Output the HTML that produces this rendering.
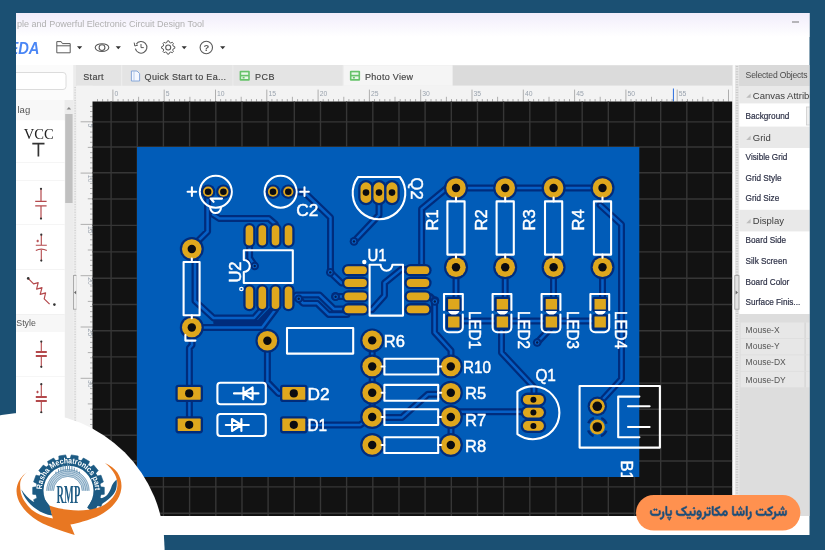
<!DOCTYPE html>
<html><head><meta charset="utf-8"><title>PCB Photo View</title>
<style>
html,body{margin:0;padding:0;}
body{width:825px;height:550px;overflow:hidden;background:#1b5073;font-family:"Liberation Sans",sans-serif;}
svg{position:absolute;left:0;top:0;display:block}
text{font-family:"Liberation Sans",sans-serif;}
.ser{font-family:"Liberation Serif",serif;}
.silk{fill:none;stroke:#fff;stroke-width:2.1;stroke-linejoin:round;stroke-linecap:round}
.lbl{fill:#fff;font-size:16px;stroke:#fff;stroke-width:0.45px;}
.ui{fill:#444;font-size:9px;stroke:#444;stroke-width:0.15px}
.prop{fill:#2f3348;font-size:8.2px;stroke:#2f3348;stroke-width:0.2px}
</style></head><body>
<svg width="825" height="550" viewBox="0 0 825 550">
<defs>
<linearGradient id="tg" x1="0" y1="0" x2="0" y2="1"><stop offset="0" stop-color="#f1edfb"/><stop offset="1" stop-color="#ffffff"/></linearGradient>
<clipPath id="win"><rect x="16" y="13" width="793.5" height="522"/></clipPath>
<clipPath id="pcbclip"><rect x="137" y="147" width="502.3" height="330"/></clipPath>
<clipPath id="canclip"><rect x="92.5" y="101.5" width="640" height="414.5"/></clipPath>
<filter id="soft2" color-interpolation-filters="sRGB" x="-5%" y="-5%" width="110%" height="110%"><feGaussianBlur stdDeviation="0.45"/></filter>
<filter id="soft" color-interpolation-filters="sRGB" x="-2%" y="-2%" width="104%" height="104%"><feGaussianBlur stdDeviation="0.7"/></filter>
</defs>

<rect x="16" y="13" width="793.5" height="522" fill="#fff"/>
<g clip-path="url(#win)"><g filter="url(#soft)">
<rect x="10" y="13" width="805" height="24" fill="url(#tg)"/>
<text x="17" y="26.5" font-size="8.6" fill="#b0b0b0" textLength="187" lengthAdjust="spacingAndGlyphs">ple and Powerful Electronic Circuit Design Tool</text>
<rect x="792" y="21.5" width="7" height="1" fill="#777"/>
<text x="8.4" y="54" font-size="16" font-weight="bold" font-style="italic" fill="#4a86f5" textLength="31" lengthAdjust="spacingAndGlyphs">EDA</text>
<path d="M56.8 52.8V41.6h4.4l1.2 2h7.8v9.2z M56.8 45.8h13.4" fill="none" stroke="#5a5a5a" stroke-width="1" stroke-linejoin="round"/>
<path d="M77.0 46.300000000000004h5.2l-2.6 2.9z" fill="#333"/>
<ellipse cx="102" cy="47.6" rx="6.8" ry="3.9" fill="none" stroke="#5a5a5a" stroke-width="1.1"/><circle cx="102" cy="47.6" r="2.9" fill="none" stroke="#5a5a5a" stroke-width="1.1"/>
<path d="M115.7 46.300000000000004h5.2l-2.6 2.9z" fill="#333"/>
<path d="M136.2 44.2A5.8 5.8 0 1 1 135.4 48.6" fill="none" stroke="#5a5a5a" stroke-width="1.1"/><path d="M134.2 42.6l0.6 3.4 3.2-1" fill="none" stroke="#5a5a5a" stroke-width="1"/><path d="M141 44v3.6h2.8" fill="none" stroke="#5a5a5a" stroke-width="1"/>
<path d="M174.8 46.7 L174.8 48.3 L173.2 48.9 L172.7 50.1 L173.4 51.6 L172.3 52.7 L170.8 52.0 L169.6 52.5 L169.0 54.1 L167.4 54.1 L166.8 52.5 L165.6 52.0 L164.1 52.7 L163.0 51.6 L163.7 50.1 L163.2 48.9 L161.6 48.3 L161.6 46.7 L163.2 46.1 L163.7 44.9 L163.0 43.4 L164.1 42.3 L165.6 43.0 L166.8 42.5 L167.4 40.9 L169.0 40.9 L169.6 42.5 L170.8 43.0 L172.3 42.3 L173.4 43.4 L172.7 44.9 L173.2 46.1z" fill="none" stroke="#5a5a5a" stroke-width="1"/><circle cx="168.2" cy="47.5" r="2.5" fill="none" stroke="#5a5a5a" stroke-width="1.1"/>
<path d="M181.6 46.300000000000004h5.2l-2.6 2.9z" fill="#333"/>
<circle cx="206.3" cy="47.5" r="6.2" fill="none" stroke="#5a5a5a" stroke-width="1.1"/><text x="206.3" y="51" font-size="9.5" text-anchor="middle" fill="#5a5a5a" font-weight="bold">?</text>
<path d="M220.1 46.300000000000004h5.2l-2.6 2.9z" fill="#333"/>
<rect x="16" y="65" width="58" height="460" fill="#fbfbfb"/>
<rect x="10.5" y="72.5" width="55.5" height="17" rx="3" fill="#fff" stroke="#dcdcdc"/>
<rect x="16" y="100" width="49" height="20" fill="#f8f8f8"/>
<text x="17.5" y="113.2" font-size="9.5" fill="#555">lag</text>
<rect x="64.6" y="100" width="8.6" height="420" fill="#ececec"/>
<rect x="65.2" y="114" width="7.4" height="89" fill="#c0c0c0"/>
<path d="M66.6 109.5l2.3-2.6 2.3 2.6z" fill="#888"/>
<rect x="16" y="120.5" width="48.6" height="42.5" fill="#fff"/>
<rect x="16" y="162.5" width="48.6" height="1" fill="#ececec"/>
<rect x="16" y="163" width="48.6" height="18" fill="#fff"/>
<rect x="16" y="180.5" width="48.6" height="1" fill="#ececec"/>
<rect x="16" y="181" width="48.6" height="44" fill="#fff"/>
<rect x="16" y="224.5" width="48.6" height="1" fill="#ececec"/>
<rect x="16" y="225" width="48.6" height="44.60000000000002" fill="#fff"/>
<rect x="16" y="269.1" width="48.6" height="1" fill="#ececec"/>
<rect x="16" y="269.6" width="48.6" height="45.0" fill="#fff"/>
<rect x="16" y="314.1" width="48.6" height="1" fill="#ececec"/>
<rect x="16" y="314.6" width="48.6" height="17.5" fill="#f7f7f7"/>
<rect x="16" y="332" width="48.6" height="44.5" fill="#fff"/>
<rect x="16" y="376.0" width="48.6" height="1" fill="#ececec"/>
<rect x="16" y="376.5" width="48.6" height="44.5" fill="#fff"/>
<rect x="16" y="420.5" width="48.6" height="1" fill="#ececec"/>
<text x="16.3" y="326.3" font-size="8.8" fill="#555">Style</text>
<text class="ser" x="38.8" y="139" font-size="14" text-anchor="middle" fill="#222" textLength="30" lengthAdjust="spacingAndGlyphs">VCC</text>
<path d="M32.3 143.6h12.2M38.4 143.6v13" stroke="#333" stroke-width="1.7" fill="none"/>
<path d="M41 188.6v12.6M41 206v12.7M35.2 201.4h11.4M35.2 205.8h11.4" stroke="#b4494c" stroke-width="1.2" fill="none"/>
<circle cx="41" cy="188.8" r="1.1" fill="#333"/><circle cx="41" cy="218.6" r="1.1" fill="#333"/>
<path d="M41.3 234.5v10.6M41.3 250v10.8M35.8 245.2h11M35.8 250.6q5.5-3 11 0M36.4 241h2.6M37.7 239.7v2.6" stroke="#b4494c" stroke-width="1.1" fill="none"/>
<circle cx="41.3" cy="234.7" r="1.1" fill="#333"/><circle cx="41.3" cy="260.6" r="1.1" fill="#333"/>
<path d="M28.4 278.6l5.2 5.2 4.6-1.2-1.6 6.6 5.4-1.6-1.8 6.8 5.4-1.6-1.4 6 5.4 5.4" stroke="#b4494c" stroke-width="1.2" fill="none" stroke-linejoin="round"/>
<circle cx="28.2" cy="278.4" r="1.3" fill="#333"/><circle cx="54.4" cy="304.6" r="1.3" fill="#333"/>
<path d="M41.3 341.4v10M41.3 356.6v10.4" stroke="#b4494c" stroke-width="1.1" fill="none"/><path d="M35.8 352h11M35.8 356h11" stroke="#b4494c" stroke-width="2" fill="none"/>
<circle cx="41.3" cy="341.6" r="1.1" fill="#333"/><circle cx="41.3" cy="366.8" r="1.1" fill="#333"/>
<path d="M41.3 384v12M41.3 402v10.6M36.2 392h2.6M37.5 390.7v2.6" stroke="#b4494c" stroke-width="1.1" fill="none"/><path d="M35.8 397h11M35.8 401h11" stroke="#b4494c" stroke-width="2" fill="none"/>
<circle cx="41.3" cy="384.2" r="1.1" fill="#333"/><circle cx="41.3" cy="412.4" r="1.1" fill="#333"/>
<rect x="73.2" y="65" width="3.8" height="455" fill="#ececec"/>
<path d="M75.1 87V520" stroke="#cfcfcf" stroke-width="1.4" stroke-dasharray="1 1.6"/>
<rect x="73.4" y="275.6" width="3.6" height="33.6" fill="#ededed" stroke="#9a9a9a" stroke-width="0.8"/>
<path d="M76.3 290.4l-2.3 2.1 2.3 2.1z" fill="#666"/>
<rect x="76.5" y="65.2" width="656" height="20.6" fill="#dbdbdb"/>
<rect x="76.5" y="65.2" width="45" height="20.6" fill="#e4e4e4"/>
<rect x="122" y="65.2" width="110.5" height="20.6" fill="#e4e4e4"/>
<rect x="233.2" y="65.2" width="109.6" height="20.6" fill="#e4e4e4"/>
<rect x="343.4" y="65.2" width="109.2" height="20.6" fill="#f5f5f5"/>
<path d="M121.7 65.2v20.6M232.9 65.2v20.6M343.2 65.2v20.6" stroke="#f0f0f0" stroke-width="1"/>
<text class="ui" x="83.2" y="79.6" font-size="9.4" textLength="20.4">Start</text>
<text class="ui" x="144.6" y="79.6" font-size="9.4" textLength="81.5">Quick Start to Ea...</text>
<text class="ui" x="255" y="79.6" font-size="9.4" textLength="19.4">PCB</text>
<text class="ui" x="365" y="79.6" font-size="9.4" textLength="48">Photo View</text>
<path d="M131.4 71h5.6l2.6 2.6v7.4h-8.2z" fill="#f4f8ff" stroke="#7a9fd6" stroke-width="0.9"/><path d="M134 71v10" stroke="#a9c2e6" stroke-width="0.8"/>
<rect x="239.6" y="70.8" width="10.2" height="10" rx="1" fill="#66c26a"/><rect x="241.2" y="72.4" width="7" height="2.4" fill="#e9f7e9"/><rect x="241.2" y="76.4" width="7" height="2.6" fill="#e9f7e9"/><rect x="242.6" y="76.9" width="2" height="1.6" fill="#66c26a"/>
<rect x="349.9" y="70.8" width="10.2" height="10" rx="1" fill="#66c26a"/><rect x="351.5" y="72.4" width="7" height="2.4" fill="#e9f7e9"/><rect x="351.5" y="76.4" width="7" height="2.6" fill="#e9f7e9"/><rect x="352.9" y="76.9" width="2" height="1.6" fill="#66c26a"/>
<rect x="76.5" y="85.8" width="656" height="16" fill="#f3f3f3"/>
<rect x="76.5" y="85.8" width="16.2" height="434" fill="#f3f3f3"/>
<path d="M97.5 99.0v2.6M102.6 99.0v2.6M107.8 99.0v2.6M112.9 89.6v12M118.0 99.0v2.6M123.2 99.0v2.6M128.3 99.0v2.6M133.4 99.0v2.6M138.6 96.8v4.8M143.7 99.0v2.6M148.8 99.0v2.6M153.9 99.0v2.6M159.1 99.0v2.6M164.2 89.6v12M169.3 99.0v2.6M174.5 99.0v2.6M179.6 99.0v2.6M184.7 99.0v2.6M189.9 96.8v4.8M195.0 99.0v2.6M200.1 99.0v2.6M205.2 99.0v2.6M210.4 99.0v2.6M215.5 89.6v12M220.6 99.0v2.6M225.8 99.0v2.6M230.9 99.0v2.6M236.0 99.0v2.6M241.2 96.8v4.8M246.3 99.0v2.6M251.4 99.0v2.6M256.5 99.0v2.6M261.7 99.0v2.6M266.8 89.6v12M271.9 99.0v2.6M277.1 99.0v2.6M282.2 99.0v2.6M287.3 99.0v2.6M292.4 96.8v4.8M297.6 99.0v2.6M302.7 99.0v2.6M307.8 99.0v2.6M313.0 99.0v2.6M318.1 89.6v12M323.2 99.0v2.6M328.4 99.0v2.6M333.5 99.0v2.6M338.6 99.0v2.6M343.8 96.8v4.8M348.9 99.0v2.6M354.0 99.0v2.6M359.1 99.0v2.6M364.3 99.0v2.6M369.4 89.6v12M374.5 99.0v2.6M379.7 99.0v2.6M384.8 99.0v2.6M389.9 99.0v2.6M395.0 96.8v4.8M400.2 99.0v2.6M405.3 99.0v2.6M410.4 99.0v2.6M415.6 99.0v2.6M420.7 89.6v12M425.8 99.0v2.6M431.0 99.0v2.6M436.1 99.0v2.6M441.2 99.0v2.6M446.4 96.8v4.8M451.5 99.0v2.6M456.6 99.0v2.6M461.7 99.0v2.6M466.9 99.0v2.6M472.0 89.6v12M477.1 99.0v2.6M482.3 99.0v2.6M487.4 99.0v2.6M492.5 99.0v2.6M497.6 96.8v4.8M502.8 99.0v2.6M507.9 99.0v2.6M513.0 99.0v2.6M518.2 99.0v2.6M523.3 89.6v12M528.4 99.0v2.6M533.6 99.0v2.6M538.7 99.0v2.6M543.8 99.0v2.6M549.0 96.8v4.8M554.1 99.0v2.6M559.2 99.0v2.6M564.3 99.0v2.6M569.5 99.0v2.6M574.6 89.6v12M579.7 99.0v2.6M584.9 99.0v2.6M590.0 99.0v2.6M595.1 99.0v2.6M600.2 96.8v4.8M605.4 99.0v2.6M610.5 99.0v2.6M615.6 99.0v2.6M620.8 99.0v2.6M625.9 89.6v12M631.0 99.0v2.6M636.2 99.0v2.6M641.3 99.0v2.6M646.4 99.0v2.6M651.5 96.8v4.8M656.7 99.0v2.6M661.8 99.0v2.6M666.9 99.0v2.6M672.1 99.0v2.6M677.2 89.6v12M682.3 99.0v2.6M687.5 99.0v2.6M692.6 99.0v2.6M697.7 99.0v2.6M702.8 96.8v4.8M708.0 99.0v2.6M713.1 99.0v2.6M718.2 99.0v2.6M723.4 99.0v2.6M728.5 89.6v12" stroke="#a6a6a6" stroke-width="0.9" fill="none"/>
<text x="114.5" y="96.4" font-size="6.8" fill="#9aa3ae">0</text>
<text x="165.8" y="96.4" font-size="6.8" fill="#9aa3ae">5</text>
<text x="217.1" y="96.4" font-size="6.8" fill="#9aa3ae">10</text>
<text x="268.4" y="96.4" font-size="6.8" fill="#9aa3ae">15</text>
<text x="319.7" y="96.4" font-size="6.8" fill="#9aa3ae">20</text>
<text x="371.0" y="96.4" font-size="6.8" fill="#9aa3ae">25</text>
<text x="422.3" y="96.4" font-size="6.8" fill="#9aa3ae">30</text>
<text x="473.6" y="96.4" font-size="6.8" fill="#9aa3ae">35</text>
<text x="524.9" y="96.4" font-size="6.8" fill="#9aa3ae">40</text>
<text x="576.2" y="96.4" font-size="6.8" fill="#9aa3ae">45</text>
<text x="627.5" y="96.4" font-size="6.8" fill="#9aa3ae">50</text>
<text x="678.8" y="96.4" font-size="6.8" fill="#9aa3ae">55</text>
<rect x="672.9" y="88.5" width="1.1" height="13" fill="#3a78e0"/>
<path d="M90.0 106.4h2.6M90.0 111.5h2.6M90.0 116.7h2.6M80.6 121.8h12M90.0 126.9h2.6M90.0 132.1h2.6M90.0 137.2h2.6M90.0 142.3h2.6M87.8 147.4h4.8M90.0 152.6h2.6M90.0 157.7h2.6M90.0 162.8h2.6M90.0 168.0h2.6M80.6 173.1h12M90.0 178.2h2.6M90.0 183.4h2.6M90.0 188.5h2.6M90.0 193.6h2.6M87.8 198.8h4.8M90.0 203.9h2.6M90.0 209.0h2.6M90.0 214.1h2.6M90.0 219.3h2.6M80.6 224.4h12M90.0 229.5h2.6M90.0 234.7h2.6M90.0 239.8h2.6M90.0 244.9h2.6M87.8 250.0h4.8M90.0 255.2h2.6M90.0 260.3h2.6M90.0 265.4h2.6M90.0 270.6h2.6M80.6 275.7h12M90.0 280.8h2.6M90.0 286.0h2.6M90.0 291.1h2.6M90.0 296.2h2.6M87.8 301.4h4.8M90.0 306.5h2.6M90.0 311.6h2.6M90.0 316.7h2.6M90.0 321.9h2.6M80.6 327.0h12M90.0 332.1h2.6M90.0 337.3h2.6M90.0 342.4h2.6M90.0 347.5h2.6M87.8 352.6h4.8M90.0 357.8h2.6M90.0 362.9h2.6M90.0 368.0h2.6M90.0 373.2h2.6M80.6 378.3h12M90.0 383.4h2.6M90.0 388.6h2.6M90.0 393.7h2.6M90.0 398.8h2.6M87.8 403.9h4.8M90.0 409.1h2.6M90.0 414.2h2.6M90.0 419.3h2.6M90.0 424.5h2.6M80.6 429.6h12M90.0 434.7h2.6M90.0 439.9h2.6M90.0 445.0h2.6M90.0 450.1h2.6M87.8 455.2h4.8M90.0 460.4h2.6M90.0 465.5h2.6M90.0 470.6h2.6M90.0 475.8h2.6M80.6 480.9h12M90.0 486.0h2.6M90.0 491.2h2.6M90.0 496.3h2.6M90.0 501.4h2.6M87.8 506.6h4.8M90.0 511.7h2.6" stroke="#a6a6a6" stroke-width="0.9" fill="none"/>
<text transform="translate(88.4 123.4) rotate(90)" font-size="6.8" fill="#9aa3ae">5</text>
<text transform="translate(88.4 174.7) rotate(90)" font-size="6.8" fill="#9aa3ae">10</text>
<text transform="translate(88.4 226.0) rotate(90)" font-size="6.8" fill="#9aa3ae">15</text>
<text transform="translate(88.4 277.3) rotate(90)" font-size="6.8" fill="#9aa3ae">20</text>
<text transform="translate(88.4 328.6) rotate(90)" font-size="6.8" fill="#9aa3ae">25</text>
<text transform="translate(88.4 379.9) rotate(90)" font-size="6.8" fill="#9aa3ae">30</text>
<text transform="translate(88.4 431.2) rotate(90)" font-size="6.8" fill="#9aa3ae">35</text>
<text transform="translate(88.4 482.5) rotate(90)" font-size="6.8" fill="#9aa3ae">40</text>
<rect x="92.5" y="101.5" width="640" height="414.5" fill="#121212"/>
<path d="M111.1 101.5V516M137.3 101.5V516M163.4 101.5V516M189.6 101.5V516M215.8 101.5V516M242.0 101.5V516M268.1 101.5V516M294.3 101.5V516M320.5 101.5V516M346.6 101.5V516M372.8 101.5V516M399.0 101.5V516M425.1 101.5V516M451.3 101.5V516M477.5 101.5V516M503.6 101.5V516M529.8 101.5V516M556.0 101.5V516M582.2 101.5V516M608.3 101.5V516M634.5 101.5V516M660.7 101.5V516M686.8 101.5V516M713.0 101.5V516M92.5 121.9H732.5M92.5 147.0H732.5M92.5 172.8H732.5M92.5 199.0H732.5M92.5 225.4H732.5M92.5 251.9H732.5M92.5 278.2H732.5M92.5 304.5H732.5M92.5 330.7H732.5M92.5 356.9H732.5M92.5 383.1H732.5M92.5 409.3H732.5M92.5 435.2H732.5M92.5 461.0H732.5M92.5 486.9H732.5M92.5 513.2H732.5" stroke="#363636" stroke-width="1.4" fill="none"/>
<rect x="137" y="147" width="502.3" height="330" fill="#015cb8"/>
<g clip-path="url(#pcbclip)">
<path d="M216 322.6H259l14.5-15" fill="none" stroke="#002c7c" stroke-width="5.5" stroke-linejoin="round" stroke-linecap="round"/>
<path d="M207.6 192V231.5L192 247M213 214.4l6.6 4.2H269l6.4 5.6V232M249.6 240V258l4.4 6.5M289 192h15l26.5 25.5V272.5M195 252V301l18.5 17H254l8-9M192 327.6H262l13.5-18M192 327.6V345L189.4 348V424M267.4 341V382l11 11.4h14M288.5 297h6l2-2H319.5l14.5 14h12M298.6 298.6l4.4 4.6H317l11.6 11.2H347M330.5 272.5l11 10.5h8M335.4 296.4h12M366 309.6h6l12.5-14V283l16.5-13.4h8M379 200v15l-25 26.4M456 188h-9l-25.4 21V270M456 188H602.5M456 267V300M505.2 267V300M553.5 267V300M602.5 267V300M454 321H600M549 330l-11.8 12.5M501.5 326V352.7L534 387.3V399M418 296.4h12l4.6 4.4V332.4L451 350.5V366M600 205l21.5 19.5V379L598.5 404M372.2 340V417M451 417V445M300 425h60l12-8M372 417.4H402L428 394.2H451M451 411.8H533" fill="none" stroke="#002c7c" stroke-width="7" stroke-linejoin="round" stroke-linecap="round"/>
<path d="M207.6 192V231.5L192 247M213 214.4l6.6 4.2H269l6.4 5.6V232M249.6 240V258l4.4 6.5M289 192h15l26.5 25.5V272.5M195 252V301l18.5 17H254l8-9M192 327.6H262l13.5-18M192 327.6V345L189.4 348V424M267.4 341V382l11 11.4h14M288.5 297h6l2-2H319.5l14.5 14h12M298.6 298.6l4.4 4.6H317l11.6 11.2H347M330.5 272.5l11 10.5h8M335.4 296.4h12M366 309.6h6l12.5-14V283l16.5-13.4h8M379 200v15l-25 26.4M456 188h-9l-25.4 21V270M456 188H602.5M456 267V300M505.2 267V300M553.5 267V300M602.5 267V300M454 321H600M549 330l-11.8 12.5M501.5 326V352.7L534 387.3V399M418 296.4h12l4.6 4.4V332.4L451 350.5V366M600 205l21.5 19.5V379L598.5 404M372.2 340V417M451 417V445M300 425h60l12-8M372 417.4H402L428 394.2H451M451 411.8H533" fill="none" stroke="#0660c6" stroke-width="2.5" stroke-linejoin="round" stroke-linecap="round"/>
<circle cx="330.3" cy="272.4" r="4.3" fill="#002c7c"/><circle cx="330.3" cy="272.4" r="2.3" fill="#0660c6"/><circle cx="330.3" cy="272.4" r="1.2" fill="#051c48"/>
<circle cx="335.4" cy="296.4" r="4.3" fill="#002c7c"/><circle cx="335.4" cy="296.4" r="2.3" fill="#0660c6"/><circle cx="335.4" cy="296.4" r="1.2" fill="#051c48"/>
<circle cx="354" cy="241.4" r="4.3" fill="#002c7c"/><circle cx="354" cy="241.4" r="2.3" fill="#0660c6"/><circle cx="354" cy="241.4" r="1.2" fill="#051c48"/>
<circle cx="298.7" cy="298.7" r="4.3" fill="#002c7c"/><circle cx="298.7" cy="298.7" r="2.3" fill="#0660c6"/><circle cx="298.7" cy="298.7" r="1.2" fill="#051c48"/>
<circle cx="335.6" cy="296.7" r="4.3" fill="#002c7c"/><circle cx="335.6" cy="296.7" r="2.3" fill="#0660c6"/><circle cx="335.6" cy="296.7" r="1.2" fill="#051c48"/>
<circle cx="435" cy="300.5" r="4.3" fill="#002c7c"/><circle cx="435" cy="300.5" r="2.3" fill="#0660c6"/><circle cx="435" cy="300.5" r="1.2" fill="#051c48"/>
<circle cx="434.8" cy="301.5" r="4.3" fill="#002c7c"/><circle cx="434.8" cy="301.5" r="2.3" fill="#0660c6"/><circle cx="434.8" cy="301.5" r="1.2" fill="#051c48"/>
<circle cx="537.2" cy="342.5" r="4.3" fill="#002c7c"/><circle cx="537.2" cy="342.5" r="2.3" fill="#0660c6"/><circle cx="537.2" cy="342.5" r="1.2" fill="#051c48"/>
<circle cx="254.7" cy="266" r="4.3" fill="#002c7c"/><circle cx="254.7" cy="266" r="2.3" fill="#0660c6"/><circle cx="254.7" cy="266" r="1.2" fill="#051c48"/>
<circle class="silk" cx="215.8" cy="191.7" r="16"/>
<circle class="silk" cx="280.6" cy="191.7" r="16"/>
<circle cx="208.1" cy="191.7" r="7.3" fill="#002c7c"/><circle cx="208.1" cy="191.7" r="5.1" fill="#dfa71d"/><circle cx="208.1" cy="191.7" r="3.3" fill="#0c0c10"/>
<circle cx="223.4" cy="191.7" r="7.3" fill="#002c7c"/><circle cx="223.4" cy="191.7" r="5.1" fill="#dfa71d"/><circle cx="223.4" cy="191.7" r="3.3" fill="#0c0c10"/>
<circle cx="273" cy="191.7" r="7.3" fill="#002c7c"/><circle cx="273" cy="191.7" r="5.1" fill="#dfa71d"/><circle cx="273" cy="191.7" r="3.3" fill="#0c0c10"/>
<circle cx="288.3" cy="191.7" r="7.3" fill="#002c7c"/><circle cx="288.3" cy="191.7" r="5.1" fill="#dfa71d"/><circle cx="288.3" cy="191.7" r="3.3" fill="#0c0c10"/>
<path class="silk" d="M187.6 191.7h8.6M191.9 187.4v8.6M300.2 191.7h8.6M304.5 187.4v8.6" stroke-width="2.4"/>
<path class="silk" d="M222 198.6h-11.4l3 3.2M210.2 207.6a5.4 5.4 0 1 0 10.8 0" stroke-width="1.7"/>
<text class="lbl" transform="translate(296.2 216.4)" font-size="16.5" textLength="22.1" lengthAdjust="spacingAndGlyphs">C2</text>
<circle cx="191.8" cy="249" r="12.0" fill="#002c7c"/><circle cx="191.8" cy="249" r="9.8" fill="#dfa71d"/><circle cx="191.8" cy="249" r="4.2" fill="#0c0c10"/>
<circle cx="191.8" cy="327.5" r="12.0" fill="#002c7c"/><circle cx="191.8" cy="327.5" r="9.8" fill="#dfa71d"/><circle cx="191.8" cy="327.5" r="4.2" fill="#0c0c10"/>
<rect class="silk" x="183.6" y="262" width="16" height="53.2"/>
<path class="silk" d="M191.8 258.5V262M191.8 315.2v3" />
<path class="silk" d="M185.4 335v5.6h10" stroke-width="1.5"/>
<rect x="243.3" y="222.9" width="12.2" height="25.0" rx="6.1" fill="#002c7c"/><rect x="245.6" y="225.2" width="7.6" height="20.4" rx="3.8" fill="#dfa71d"/>
<rect x="243.3" y="284.3" width="12.2" height="27.0" rx="6.1" fill="#002c7c"/><rect x="245.6" y="286.6" width="7.6" height="22.4" rx="3.8" fill="#dfa71d"/>
<rect x="256.2" y="222.9" width="12.2" height="25.0" rx="6.1" fill="#002c7c"/><rect x="258.5" y="225.2" width="7.6" height="20.4" rx="3.8" fill="#dfa71d"/>
<rect x="256.2" y="284.3" width="12.2" height="27.0" rx="6.1" fill="#002c7c"/><rect x="258.5" y="286.6" width="7.6" height="22.4" rx="3.8" fill="#dfa71d"/>
<rect x="269.4" y="222.9" width="12.2" height="25.0" rx="6.1" fill="#002c7c"/><rect x="271.7" y="225.2" width="7.6" height="20.4" rx="3.8" fill="#dfa71d"/>
<rect x="269.4" y="284.3" width="12.2" height="27.0" rx="6.1" fill="#002c7c"/><rect x="271.7" y="286.6" width="7.6" height="22.4" rx="3.8" fill="#dfa71d"/>
<rect x="282.4" y="222.9" width="12.2" height="25.0" rx="6.1" fill="#002c7c"/><rect x="284.7" y="225.2" width="7.6" height="20.4" rx="3.8" fill="#dfa71d"/>
<rect x="282.4" y="284.3" width="12.2" height="27.0" rx="6.1" fill="#002c7c"/><rect x="284.7" y="286.6" width="7.6" height="22.4" rx="3.8" fill="#dfa71d"/>
<path class="silk" d="M243.8 260V250.3H292.8V283H243.8V272A6 6 0 0 0 243.8 260z"/>
<circle cx="241.4" cy="289" r="1.7" fill="none" stroke="#fff" stroke-width="1.3"/>
<text class="lbl" transform="translate(240.6 282.6) rotate(-90)" font-size="16.5" textLength="21.1" lengthAdjust="spacingAndGlyphs">U2</text>
<circle cx="267.4" cy="340.7" r="12.0" fill="#002c7c"/><circle cx="267.4" cy="340.7" r="9.8" fill="#dfa71d"/><circle cx="267.4" cy="340.7" r="4.2" fill="#0c0c10"/>
<rect class="silk" x="287" y="328" width="66.2" height="25.6" stroke-width="2"/>
<rect x="175.4" y="384.8" width="27.6" height="17.2" rx="3.0999999999999996" fill="#002c7c"/><rect x="177.7" y="387.1" width="23" height="12.6" rx="0.8" fill="#dfa71d"/>
<circle cx="189.2" cy="393.4" r="4.1" fill="#0c0c10"/>
<rect x="280.0" y="384.8" width="27.6" height="17.2" rx="3.0999999999999996" fill="#002c7c"/><rect x="282.3" y="387.1" width="23" height="12.6" rx="0.8" fill="#dfa71d"/>
<circle cx="293.8" cy="393.4" r="4.1" fill="#0c0c10"/>
<rect x="175.4" y="416.2" width="27.6" height="17.2" rx="3.0999999999999996" fill="#002c7c"/><rect x="177.7" y="418.5" width="23" height="12.6" rx="0.8" fill="#dfa71d"/>
<circle cx="189.2" cy="424.8" r="4.1" fill="#0c0c10"/>
<rect x="280.0" y="416.2" width="27.6" height="17.2" rx="3.0999999999999996" fill="#002c7c"/><rect x="282.3" y="418.5" width="23" height="12.6" rx="0.8" fill="#dfa71d"/>
<circle cx="293.8" cy="424.8" r="4.1" fill="#0c0c10"/>
<rect class="silk" x="217.4" y="382.8" width="48.4" height="21.4" rx="3"/>
<rect class="silk" x="217.4" y="414" width="48.4" height="22" rx="3"/>
<path class="silk" d="M234 393.4h24.5M243.4 387.6v11.6M252.6 387.4v12l-9.2-6z" stroke-width="1.5"/>
<path class="silk" d="M225.8 425h23M241.4 419v12M232 419v12l9.4-6z" stroke-width="1.5"/>
<text class="lbl" transform="translate(307.4 400)" font-size="16.5" textLength="22.1" lengthAdjust="spacingAndGlyphs">D2</text>
<text class="lbl" transform="translate(307.4 431)" font-size="16.5" textLength="19.6" lengthAdjust="spacingAndGlyphs">D1</text>
<path class="silk" d="M358.1 177H399.9A26.3 26.3 0 1 1 358.1 177z"/>
<rect x="358.2" y="180.0" width="15.6" height="25.2" rx="7.8" fill="#002c7c"/><rect x="360.5" y="182.3" width="11" height="20.6" rx="5.5" fill="#dfa71d"/>
<circle cx="366" cy="192.6" r="3.3" fill="#0c0c10"/>
<rect x="371.2" y="180.0" width="15.6" height="25.2" rx="7.8" fill="#002c7c"/><rect x="373.5" y="182.3" width="11" height="20.6" rx="5.5" fill="#dfa71d"/>
<circle cx="379" cy="192.6" r="3.3" fill="#0c0c10"/>
<rect x="384.2" y="180.0" width="15.6" height="25.2" rx="7.8" fill="#002c7c"/><rect x="386.5" y="182.3" width="11" height="20.6" rx="5.5" fill="#dfa71d"/>
<circle cx="392" cy="192.6" r="3.3" fill="#0c0c10"/>
<text class="lbl" transform="translate(410.6 177.6) rotate(90)" font-size="16.5" textLength="22.0" lengthAdjust="spacingAndGlyphs">Q2</text>
<rect x="342.0" y="264.0" width="27.2" height="12.4" rx="6.199999999999999" fill="#002c7c"/><rect x="344.3" y="266.3" width="22.6" height="7.8" rx="3.9" fill="#dfa71d"/>
<rect x="404.4" y="264.0" width="27.2" height="12.4" rx="6.199999999999999" fill="#002c7c"/><rect x="406.7" y="266.3" width="22.6" height="7.8" rx="3.9" fill="#dfa71d"/>
<rect x="342.0" y="276.8" width="27.2" height="12.4" rx="6.199999999999999" fill="#002c7c"/><rect x="344.3" y="279.1" width="22.6" height="7.8" rx="3.9" fill="#dfa71d"/>
<rect x="404.4" y="276.8" width="27.2" height="12.4" rx="6.199999999999999" fill="#002c7c"/><rect x="406.7" y="279.1" width="22.6" height="7.8" rx="3.9" fill="#dfa71d"/>
<rect x="342.0" y="290.2" width="27.2" height="12.4" rx="6.199999999999999" fill="#002c7c"/><rect x="344.3" y="292.5" width="22.6" height="7.8" rx="3.9" fill="#dfa71d"/>
<rect x="404.4" y="290.2" width="27.2" height="12.4" rx="6.199999999999999" fill="#002c7c"/><rect x="406.7" y="292.5" width="22.6" height="7.8" rx="3.9" fill="#dfa71d"/>
<rect x="342.0" y="303.1" width="27.2" height="12.4" rx="6.199999999999999" fill="#002c7c"/><rect x="344.3" y="305.4" width="22.6" height="7.8" rx="3.9" fill="#dfa71d"/>
<rect x="404.4" y="303.1" width="27.2" height="12.4" rx="6.199999999999999" fill="#002c7c"/><rect x="406.7" y="305.4" width="22.6" height="7.8" rx="3.9" fill="#dfa71d"/>
<path class="silk" d="M380.6 264.8H369.6V315.6H403V264.8H392.4A5.9 5.9 0 0 1 380.6 264.8z"/>
<circle cx="364.3" cy="262" r="2.2" fill="#fff"/>
<text class="lbl" transform="translate(367.4 260.6)" font-size="16.5" textLength="19.1" lengthAdjust="spacingAndGlyphs">U1</text>
<circle cx="456" cy="188" r="12.0" fill="#002c7c"/><circle cx="456" cy="188" r="9.8" fill="#dfa71d"/><circle cx="456" cy="188" r="4.2" fill="#0c0c10"/>
<circle cx="456" cy="267.2" r="12.0" fill="#002c7c"/><circle cx="456" cy="267.2" r="9.8" fill="#dfa71d"/><circle cx="456" cy="267.2" r="4.2" fill="#0c0c10"/>
<rect class="silk" x="447.4" y="201.4" width="17.2" height="53.2"/>
<path class="silk" d="M456 197.6v3.8M456 254.6v3.2"/>
<text class="lbl" transform="translate(437.8 230.4) rotate(-90)" font-size="16.5" textLength="21.1" lengthAdjust="spacingAndGlyphs">R1</text>
<circle cx="505.2" cy="188" r="12.0" fill="#002c7c"/><circle cx="505.2" cy="188" r="9.8" fill="#dfa71d"/><circle cx="505.2" cy="188" r="4.2" fill="#0c0c10"/>
<circle cx="505.2" cy="267.2" r="12.0" fill="#002c7c"/><circle cx="505.2" cy="267.2" r="9.8" fill="#dfa71d"/><circle cx="505.2" cy="267.2" r="4.2" fill="#0c0c10"/>
<rect class="silk" x="496.59999999999997" y="201.4" width="17.2" height="53.2"/>
<path class="silk" d="M505.2 197.6v3.8M505.2 254.6v3.2"/>
<text class="lbl" transform="translate(487.0 230.4) rotate(-90)" font-size="16.5" textLength="21.1" lengthAdjust="spacingAndGlyphs">R2</text>
<circle cx="553.6" cy="188" r="12.0" fill="#002c7c"/><circle cx="553.6" cy="188" r="9.8" fill="#dfa71d"/><circle cx="553.6" cy="188" r="4.2" fill="#0c0c10"/>
<circle cx="553.6" cy="267.2" r="12.0" fill="#002c7c"/><circle cx="553.6" cy="267.2" r="9.8" fill="#dfa71d"/><circle cx="553.6" cy="267.2" r="4.2" fill="#0c0c10"/>
<rect class="silk" x="545.0" y="201.4" width="17.2" height="53.2"/>
<path class="silk" d="M553.6 197.6v3.8M553.6 254.6v3.2"/>
<text class="lbl" transform="translate(535.4 230.4) rotate(-90)" font-size="16.5" textLength="21.1" lengthAdjust="spacingAndGlyphs">R3</text>
<circle cx="602.5" cy="188" r="12.0" fill="#002c7c"/><circle cx="602.5" cy="188" r="9.8" fill="#dfa71d"/><circle cx="602.5" cy="188" r="4.2" fill="#0c0c10"/>
<circle cx="602.5" cy="267.2" r="12.0" fill="#002c7c"/><circle cx="602.5" cy="267.2" r="9.8" fill="#dfa71d"/><circle cx="602.5" cy="267.2" r="4.2" fill="#0c0c10"/>
<rect class="silk" x="593.9" y="201.4" width="17.2" height="53.2"/>
<path class="silk" d="M602.5 197.6v3.8M602.5 254.6v3.2"/>
<text class="lbl" transform="translate(584.3 230.4) rotate(-90)" font-size="16.5" textLength="21.1" lengthAdjust="spacingAndGlyphs">R4</text>
<rect x="445.8" y="296.7" width="16.0" height="15.2" rx="2.6999999999999997" fill="#002c7c"/><rect x="448.1" y="299.0" width="11.4" height="10.6" rx="0.4" fill="#dfa71d"/>
<rect x="445.8" y="314.1" width="16.0" height="15.8" rx="2.6999999999999997" fill="#002c7c"/><rect x="448.1" y="316.4" width="11.4" height="11.2" rx="0.4" fill="#dfa71d"/>
<path class="silk" d="M444.0 310V294H462.79999999999995V310M444.0 314.6V327.4a4.8 4.8 0 0 0 4.8 4.8H458.0a4.8 4.8 0 0 0 4.8 -4.8V314.6" stroke-width="2.3" stroke-linecap="butt"/>
<path d="M448.09999999999997 310.9h11.4q-1.2 3.6-5.7 3.6t-5.7-3.6z" fill="#fff"/>
<text class="lbl" transform="translate(469.0 311) rotate(90)" font-size="15.4" textLength="37.9" lengthAdjust="spacingAndGlyphs">LED1</text>
<rect x="494.4" y="296.7" width="16.0" height="15.2" rx="2.6999999999999997" fill="#002c7c"/><rect x="496.7" y="299.0" width="11.4" height="10.6" rx="0.4" fill="#dfa71d"/>
<rect x="494.4" y="314.1" width="16.0" height="15.8" rx="2.6999999999999997" fill="#002c7c"/><rect x="496.7" y="316.4" width="11.4" height="11.2" rx="0.4" fill="#dfa71d"/>
<path class="silk" d="M492.6 310V294H511.4V310M492.6 314.6V327.4a4.8 4.8 0 0 0 4.8 4.8H506.6a4.8 4.8 0 0 0 4.8 -4.8V314.6" stroke-width="2.3" stroke-linecap="butt"/>
<path d="M496.7 310.9h11.4q-1.2 3.6-5.7 3.6t-5.7-3.6z" fill="#fff"/>
<text class="lbl" transform="translate(517.6 311) rotate(90)" font-size="15.4" textLength="37.9" lengthAdjust="spacingAndGlyphs">LED2</text>
<rect x="543.4" y="296.7" width="16.0" height="15.2" rx="2.6999999999999997" fill="#002c7c"/><rect x="545.7" y="299.0" width="11.4" height="10.6" rx="0.4" fill="#dfa71d"/>
<rect x="543.4" y="314.1" width="16.0" height="15.8" rx="2.6999999999999997" fill="#002c7c"/><rect x="545.7" y="316.4" width="11.4" height="11.2" rx="0.4" fill="#dfa71d"/>
<path class="silk" d="M541.6 310V294H560.4V310M541.6 314.6V327.4a4.8 4.8 0 0 0 4.8 4.8H555.6a4.8 4.8 0 0 0 4.8 -4.8V314.6" stroke-width="2.3" stroke-linecap="butt"/>
<path d="M545.7 310.9h11.4q-1.2 3.6-5.7 3.6t-5.7-3.6z" fill="#fff"/>
<text class="lbl" transform="translate(566.6 311) rotate(90)" font-size="15.4" textLength="37.9" lengthAdjust="spacingAndGlyphs">LED3</text>
<rect x="592.2" y="296.7" width="16.0" height="15.2" rx="2.6999999999999997" fill="#002c7c"/><rect x="594.5" y="299.0" width="11.4" height="10.6" rx="0.4" fill="#dfa71d"/>
<rect x="592.2" y="314.1" width="16.0" height="15.8" rx="2.6999999999999997" fill="#002c7c"/><rect x="594.5" y="316.4" width="11.4" height="11.2" rx="0.4" fill="#dfa71d"/>
<path class="silk" d="M590.4 310V294H609.1999999999999V310M590.4 314.6V327.4a4.8 4.8 0 0 0 4.8 4.8H604.4a4.8 4.8 0 0 0 4.8 -4.8V314.6" stroke-width="2.3" stroke-linecap="butt"/>
<path d="M594.5 310.9h11.4q-1.2 3.6-5.7 3.6t-5.7-3.6z" fill="#fff"/>
<text class="lbl" transform="translate(615.4 311) rotate(90)" font-size="15.4" textLength="37.9" lengthAdjust="spacingAndGlyphs">LED4</text>
<circle cx="372.2" cy="340.4" r="12.0" fill="#002c7c"/><circle cx="372.2" cy="340.4" r="9.8" fill="#dfa71d"/><circle cx="372.2" cy="340.4" r="4.2" fill="#0c0c10"/>
<text class="lbl" transform="translate(383.8 347)" font-size="16.5" textLength="21.1" lengthAdjust="spacingAndGlyphs">R6</text>
<circle cx="372.2" cy="366.5" r="12.0" fill="#002c7c"/><circle cx="372.2" cy="366.5" r="9.8" fill="#dfa71d"/><circle cx="372.2" cy="366.5" r="4.2" fill="#0c0c10"/>
<circle cx="450.8" cy="366.5" r="12.0" fill="#002c7c"/><circle cx="450.8" cy="366.5" r="9.8" fill="#dfa71d"/><circle cx="450.8" cy="366.5" r="4.2" fill="#0c0c10"/>
<rect class="silk" x="384.4" y="358.7" width="53.8" height="15.8"/>
<path class="silk" d="M381.6 366.5h2.8M438.2 366.5h3"/>
<text class="lbl" transform="translate(463 372.7)" font-size="16.5" textLength="27.9" lengthAdjust="spacingAndGlyphs">R10</text>
<circle cx="372.2" cy="392.7" r="12.0" fill="#002c7c"/><circle cx="372.2" cy="392.7" r="9.8" fill="#dfa71d"/><circle cx="372.2" cy="392.7" r="4.2" fill="#0c0c10"/>
<circle cx="450.8" cy="392.7" r="12.0" fill="#002c7c"/><circle cx="450.8" cy="392.7" r="9.8" fill="#dfa71d"/><circle cx="450.8" cy="392.7" r="4.2" fill="#0c0c10"/>
<rect class="silk" x="384.4" y="384.9" width="53.8" height="15.8"/>
<path class="silk" d="M381.6 392.7h2.8M438.2 392.7h3"/>
<text class="lbl" transform="translate(465 398.9)" font-size="16.5" textLength="21.1" lengthAdjust="spacingAndGlyphs">R5</text>
<circle cx="372.2" cy="417" r="12.0" fill="#002c7c"/><circle cx="372.2" cy="417" r="9.8" fill="#dfa71d"/><circle cx="372.2" cy="417" r="4.2" fill="#0c0c10"/>
<circle cx="450.8" cy="417" r="12.0" fill="#002c7c"/><circle cx="450.8" cy="417" r="9.8" fill="#dfa71d"/><circle cx="450.8" cy="417" r="4.2" fill="#0c0c10"/>
<rect class="silk" x="384.4" y="409.2" width="53.8" height="15.8"/>
<path class="silk" d="M381.6 417h2.8M438.2 417h3"/>
<text class="lbl" transform="translate(465 426.2)" font-size="16.5" textLength="21.1" lengthAdjust="spacingAndGlyphs">R7</text>
<circle cx="372.2" cy="445" r="12.0" fill="#002c7c"/><circle cx="372.2" cy="445" r="9.8" fill="#dfa71d"/><circle cx="372.2" cy="445" r="4.2" fill="#0c0c10"/>
<circle cx="450.8" cy="445" r="12.0" fill="#002c7c"/><circle cx="450.8" cy="445" r="9.8" fill="#dfa71d"/><circle cx="450.8" cy="445" r="4.2" fill="#0c0c10"/>
<rect class="silk" x="384.4" y="437.2" width="53.8" height="15.8"/>
<path class="silk" d="M381.6 445h2.8M438.2 445h3"/>
<text class="lbl" transform="translate(465 452.2)" font-size="16.5" textLength="21.1" lengthAdjust="spacingAndGlyphs">R8</text>
<path class="silk" d="M517.4 391.5V434.1A26.4 26.4 0 1 0 517.4 391.5z"/>
<rect x="520.6" y="392.6" width="25.6" height="14.2" rx="7.1" fill="#002c7c"/><rect x="522.9" y="394.9" width="21" height="9.6" rx="4.8" fill="#dfa71d"/>
<circle cx="533.4" cy="399.7" r="3" fill="#0c0c10"/>
<rect x="520.6" y="405.5" width="25.6" height="14.2" rx="7.1" fill="#002c7c"/><rect x="522.9" y="407.8" width="21" height="9.6" rx="4.8" fill="#dfa71d"/>
<circle cx="533.4" cy="412.6" r="3" fill="#0c0c10"/>
<rect x="520.6" y="418.8" width="25.6" height="14.2" rx="7.1" fill="#002c7c"/><rect x="522.9" y="421.1" width="21" height="9.6" rx="4.8" fill="#dfa71d"/>
<circle cx="533.4" cy="425.9" r="3" fill="#0c0c10"/>
<text class="lbl" transform="translate(535.4 380.6)" font-size="16.5" textLength="20.5" lengthAdjust="spacingAndGlyphs">Q1</text>
<circle cx="597.3" cy="406.3" r="9.7" fill="#002c7c"/><circle cx="597.3" cy="406.3" r="7.5" fill="#dfa71d"/><circle cx="597.3" cy="406.3" r="4.8" fill="#0c0c10"/>
<circle cx="597.3" cy="427" r="9.8" fill="none" stroke="#002c7c" stroke-width="2.4" stroke-dasharray="8 7.39" stroke-dashoffset="-3.7"/>
<circle cx="597.3" cy="427" r="7.5" fill="#dfa71d"/><circle cx="597.3" cy="427" r="4.8" fill="#0c0c10"/>
</g>
<rect class="silk" x="579.6" y="386" width="80.3" height="61.6" stroke-width="2.4"/>
<path class="silk" d="M639.4 396.6H618.2V437.2H639.4M628 406.3H649.6M628 427H649.6" stroke-width="2.3"/>
<g clip-path="url(#pcbclip)"><text class="lbl" transform="translate(621.4 460.6) rotate(90)" font-size="16.5" textLength="20.2" lengthAdjust="spacingAndGlyphs">B1</text></g>
<rect x="732.3" y="65" width="7" height="455" fill="#e6e6e6"/>
<rect x="733" y="65" width="2" height="455" fill="#fafafa"/>
<path d="M737 66V516" stroke="#c8c8c8" stroke-width="2.4" stroke-dasharray="1 1.6"/>
<rect x="739.2" y="65" width="75" height="451" fill="#dddddd"/>
<rect x="739.2" y="65" width="75" height="21.4" fill="#d9d9d9"/>
<text x="745.6" y="78.4" font-size="8.6" fill="#4a4a4a" textLength="62">Selected Objects</text>
<rect x="739.2" y="86.6" width="75" height="227.4" fill="#fff"/>
<rect x="739.2" y="87" width="75" height="16.400000000000006" fill="#e9e9e9"/>
<path d="M746.2 97.8l4.4-4.4v4.4z" fill="#bdbdbd"/>
<text x="752.8" y="98.8" font-size="9.5" fill="#3c3c3c">Canvas Attributes</text>
<rect x="739.2" y="126.6" width="75" height="21.400000000000006" fill="#e9e9e9"/>
<path d="M746.2 139.9l4.4-4.4v4.4z" fill="#bdbdbd"/>
<text x="752.8" y="140.9" font-size="9.5" fill="#3c3c3c">Grid</text>
<rect x="739.2" y="209.8" width="75" height="21.599999999999994" fill="#e9e9e9"/>
<path d="M746.2 223.20000000000002l4.4-4.4v4.4z" fill="#bdbdbd"/>
<text x="752.8" y="224.20000000000002" font-size="9.5" fill="#3c3c3c">Display</text>
<text class="prop" x="745.6" y="119.2">Background</text>
<text class="prop" x="745.6" y="160.2">Visible Grid</text>
<text class="prop" x="745.6" y="180.9">Grid Style</text>
<text class="prop" x="745.6" y="201">Grid Size</text>
<text class="prop" x="745.6" y="243.4">Board Side</text>
<text class="prop" x="745.6" y="264.2">Silk Screen</text>
<text class="prop" x="745.6" y="284.6">Board Color</text>
<text class="prop" x="745.6" y="305.4">Surface Finis...</text>
<rect x="806.5" y="107" width="8" height="18" fill="#f0f0f0" stroke="#ccc" stroke-width="0.8"/>
<rect x="740.6" y="322.5" width="70" height="15.6" fill="#e7e7e7"/>
<rect x="804.6" y="322.5" width="1" height="15.6" fill="#d0d0d0"/>
<text x="745.6" y="333" font-size="8.5" fill="#555">Mouse-X</text>
<rect x="740.6" y="338.9" width="70" height="15.6" fill="#e7e7e7"/>
<rect x="804.6" y="338.9" width="1" height="15.6" fill="#d0d0d0"/>
<text x="745.6" y="349" font-size="8.5" fill="#555">Mouse-Y</text>
<rect x="740.6" y="355.3" width="70" height="15.6" fill="#e7e7e7"/>
<rect x="804.6" y="355.3" width="1" height="15.6" fill="#d0d0d0"/>
<text x="745.6" y="365.2" font-size="8.5" fill="#555">Mouse-DX</text>
<rect x="740.6" y="371.7" width="70" height="15.6" fill="#e7e7e7"/>
<rect x="804.6" y="371.7" width="1" height="15.6" fill="#d0d0d0"/>
<text x="745.6" y="382.5" font-size="8.5" fill="#555">Mouse-DY</text>
<rect x="734.8" y="275.6" width="4.2" height="33.6" fill="#e2e2e2" stroke="#9a9a9a" stroke-width="0.8"/>
<path d="M735.6 290.4l2.4 2.1-2.4 2.1z" fill="#666"/>
</g></g>
<circle cx="28.2" cy="548.8" r="136.4" fill="#fff"/>
<g filter="url(#soft2)">
<path d="M92.9 512.7A32.8 32.8 0 1 0 44.1 512.7L49.9 507.5A25 25 0 1 1 87.1 507.5z" fill="#1c5a83"/>
<path d="M97.1 505.5L101.0 506.4L103.4 499.7L99.9 497.9zM100.4 494.8L104.3 494.3L104.3 487.3L100.4 486.8zM99.9 483.7L103.4 481.9L101.0 475.2L97.1 476.1zM95.6 473.4L98.2 470.5L93.7 465.1L90.4 467.2zM88.0 465.2L89.5 461.5L83.4 458.0L81.0 461.1zM78.0 460.0L78.2 456.1L71.3 454.9L70.1 458.6zM66.9 458.6L65.7 454.9L58.8 456.1L59.0 460.0zM56.0 461.1L53.6 458.0L47.5 461.5L49.0 465.2zM46.6 467.2L43.3 465.1L38.8 470.5L41.4 473.4zM39.9 476.1L36.0 475.2L33.6 481.9L37.1 483.7zM36.6 486.8L32.7 487.3L32.7 494.3L36.6 494.8zM37.1 497.9L33.6 499.7L36.0 506.4L39.9 505.5z" fill="#1c5a83" stroke="#1c5a83" stroke-width="0.6" stroke-linejoin="round"/>
<path d="M21.3 489.5C22.5 493 24 496 26 498.9C29 503 32.5 506.5 36.2 509.1C41 512.6 46.5 514.8 52.2 515.6L50 506.2L43 497L38.5 501.5L33.3 501.8C28.5 498.5 24.5 494.5 21.3 489.5z" fill="#1c5a83"/>
<path d="M116.6 479.4C117 482.5 116.9 485.6 116.2 488.7C115.2 492 113.2 495 110.4 497.5C107.5 500.4 104 502.8 100.2 504.7C97 506.2 94 507.2 90.7 507.6L88 506.6L94.5 496L101.6 498.2C104 497.4 106 496.2 107.5 494.5C109.5 492 111 489 111.8 485.8C112.6 483.6 114.6 481.4 116.6 479.4z" fill="#1c5a83"/>
<path id="arc" d="M41.9 489.4A26.6 26.6 0 0 1 95.1 490.3" fill="none"/>
<text font-size="7.9" font-weight="bold" fill="#fff" textLength="83" lengthAdjust="spacingAndGlyphs"><textPath href="#arc">Rasha Mechatronics part</textPath></text>
<path d="M46.50000000000001 490.8A21.4 21.4 0 0 1 89.30000000000001 490.8H81.9A14 14 0 0 0 53.900000000000006 490.8z" fill="#c9dbe7"/>
<path d="M53.5 490.8A14.4 14.4 0 0 1 82.3 490.8M51.8 490.8A16.1 16.1 0 0 1 84.0 490.8M50.1 490.8A17.8 17.8 0 0 1 85.7 490.8M48.4 490.8A19.5 19.5 0 0 1 87.4 490.8M46.7 490.8A21.2 21.2 0 0 1 89.1 490.8" fill="none" stroke="#6e97b5" stroke-width="0.8"/>
<path d="M55.9 474.1v-2.5M58.5 472.6v-3.4M60.9 471.6v-4.4M63.1 470.9v-6M65.3 470.6v-5M67.5 470.4v-7.6M69.5 470.5v-5.6M71.9 470.8v-4.6M74.3 471.4v-3.6M76.9 472.4v-3M79.4 473.8v-2.2" fill="none" stroke="#5f8cad" stroke-width="0.9"/>
<text class="ser" transform="translate(68.4 503.2) scale(0.4 1)" font-size="26" font-weight="bold" text-anchor="middle" fill="#1c5a83">RMP</text>
<path d="M30.4 469.6C24.5 473.5 20.6 477.6 18.5 482C17.2 485 16.5 488 16.5 490.9C16.6 495.6 18.1 500.4 20.9 504.7C24 509.6 28.2 514 33.3 517.8C39 521.8 46 525.4 53.6 528C60 530.4 67 532.8 74.7 535L70.4 524.4C74.6 524 78.8 523 82.7 521.5C89 519.6 95 517.6 100.2 514.9C106 511.8 111 508 114.7 503.3C118.4 499 120.6 494 121.3 488.7C122 483 120.6 477.6 117.4 472.6C114.6 468.6 110.4 465.4 105 463C109 466.4 112.4 470 114.6 474C116.6 477.6 117.6 481.6 117.4 485.6C117.2 489 116.2 492 114.7 494.5C112.4 498.6 108.8 502 104.5 504.7C99.6 507.6 94 509 88.5 509.8C82 510.6 75 510.6 68.2 509.8C61.6 509 55.4 507.6 49.3 505.5L52.9 518.5C46.8 517.4 41.2 515.6 36.2 512.7C32 510.4 28.6 507.2 26 503.3C23.4 500 21.7 496.6 20.9 493.1C20.2 489.6 20 486.2 20.2 483C20.8 478.2 24.5 473.6 30.4 469.6z" fill="#e87722"/>
</g>
<rect x="636" y="495" width="164.4" height="35.6" rx="17.8" fill="#ff914f"/>
<path transform="translate(650.2 506.2) scale(0.13660 0.15026)" d="M140 81 134 88 140 95 146 88zM291 71 284 78 291 85 298 78zM275 71 268 78 275 85 282 79 282 77zM148 70 141 77 148 83 153 78 154 76zM132 70 125 77 131 83 138 77zM738 35 728 39 732 56 732 60 730 67 723 74 711 78 715 89 721 88 729 84 735 78 739 72 742 60 742 51 741 50 741 41zM98 35 88 39 91 51 91 63 90 67 84 73 77 77 71 78 71 80 75 89 81 88 90 83 97 76 100 70 102 64 102 55 102 54 102 46zM998 29 995 29 988 31 989 38 989 48 986 52 981 52 978 49 977 34 966 35 967 48 966 51 963 52 958 52 953 48 952 34 942 35 942 48 938 52 926 52 924 52 921 48 918 35 907 39 911 52 911 62 909 68 903 73 897 77 890 78 894 89 902 87 910 82 916 75 920 69 921 62 926 64 937 64 941 62 946 59 948 59 952 62 956 64 965 63 972 59 980 64 988 64 993 62 996 58 999 49 999 36zM440 28 429 30 431 40 431 47 430 49 427 52 412 52 408 47 405 35 395 39 398 50 398 55 398 56 398 63 396 67 391 73 384 77 377 78 381 89 389 87 399 80 403 76 409 62 412 64 428 64 434 62 438 58 441 48 441 38 441 37zM0 38 0 46 2 52 5 56 10 60 20 63 26 63 27 64 54 64 55 63 59 63 69 59 72 56 75 50 75 34 73 28 63 30 65 38 65 47 61 51 56 52 25 52 18 51 12 48 11 45 10 39 12 31 5 28 2 29zM363 28 355 27 349 30 344 36 341 45 341 55 343 58 347 62 354 64 362 64 363 63 364 64 363 66 355 73 346 77 341 78 345 89 352 88 364 81 370 75 374 67 376 60 375 45 370 33zM355 39 359 38 363 42 366 51 364 52 355 52 351 49 352 43zM820 16 814 22 814 23 821 30 827 23zM805 16 798 23 805 30 812 23zM45 16 39 23 46 30 52 23zM30 16 23 23 30 30 38 23zM977 12 971 19 978 25 984 19zM962 12 955 19 962 26 968 20zM668 12 662 19 669 25 675 19zM652 12 646 19 652 26 659 20zM435 7 428 14 433 19 436 20 442 13zM420 7 413 14 420 20 427 13zM321 6 313 14 320 21 328 14zM970 1 963 7 970 14 977 7zM701 1 701 64 712 64 712 1zM661 1 654 7 660 14 667 7zM601 1 601 50 603 57 608 62 614 64 627 64 632 62 637 59 638 59 642 62 647 64 652 64 655 63 663 59 666 62 671 64 678 64 685 60 689 53 690 49 690 36 688 29 685 29 678 31 680 38 680 48 677 52 672 52 669 49 667 34 657 35 658 48 656 51 654 52 648 52 644 48 642 34 633 35 633 48 630 52 628 52 616 52 614 52 612 48 611 45 611 1zM113 1 113 50 116 57 120 62 127 64 145 64 151 62 155 58 158 49 158 37 157 36 156 28 145 30 148 40 148 47 147 49 144 52 128 52 127 52 124 48 123 45 123 1zM898 0 861 15 859 19 859 23 861 28 877 38 882 43 884 47 882 50 880 52 877 52 855 52 853 52 850 48 849 34 848 33 839 34 839 47 833 52 829 52 799 52 798 52 795 52 789 49 785 45 784 39 787 31 779 28 777 29 774 38 774 46 776 52 779 56 783 59 788 62 801 64 826 64 836 62 843 57 849 62 855 64 875 64 883 62 888 60 891 56 894 50 894 44 891 38 888 34 873 22 876 20 898 11zM452 1 452 49 455 58 459 61 466 64 488 64 498 62 503 57 509 62 514 64 524 64 530 62 534 58 540 62 545 65 555 65 561 62 563 59 566 52 566 42 564 38 559 31 552 28 545 28 538 32 534 37 527 48 523 52 515 52 511 50 502 34 495 27 486 22 488 20 511 11 511 0 477 13 473 18 472 22 473 27 477 30 491 39 497 45 496 49 495 51 490 52 468 52 466 52 463 48 463 1zM547 39 550 39 553 41 555 44 556 48 555 51 552 54 548 54 540 48 542 43zM332 34 330 28 320 30 322 38 322 48 321 50 319 52 305 52 302 49 300 33 290 34 291 46 290 48 285 52 271 52 269 52 266 48 259 36 253 30 241 22 245 20 267 11 267 0 266 0 250 7 237 12 230 15 228 19 228 23 230 27 246 38 252 45 252 48 250 51 246 52 215 52 208 51 205 49 201 45 200 41 202 31 195 28 193 28 191 31 190 39 190 45 193 54 198 59 202 61 211 63 216 63 216 64 244 64 252 62 259 57 264 62 270 64 284 64 290 62 295 59 301 62 305 64 320 64 327 61 330 55 332 50z" fill="#1d4e79" stroke="#1d4e79" stroke-width="3.7" fill-rule="evenodd"/>
</svg></body></html>
